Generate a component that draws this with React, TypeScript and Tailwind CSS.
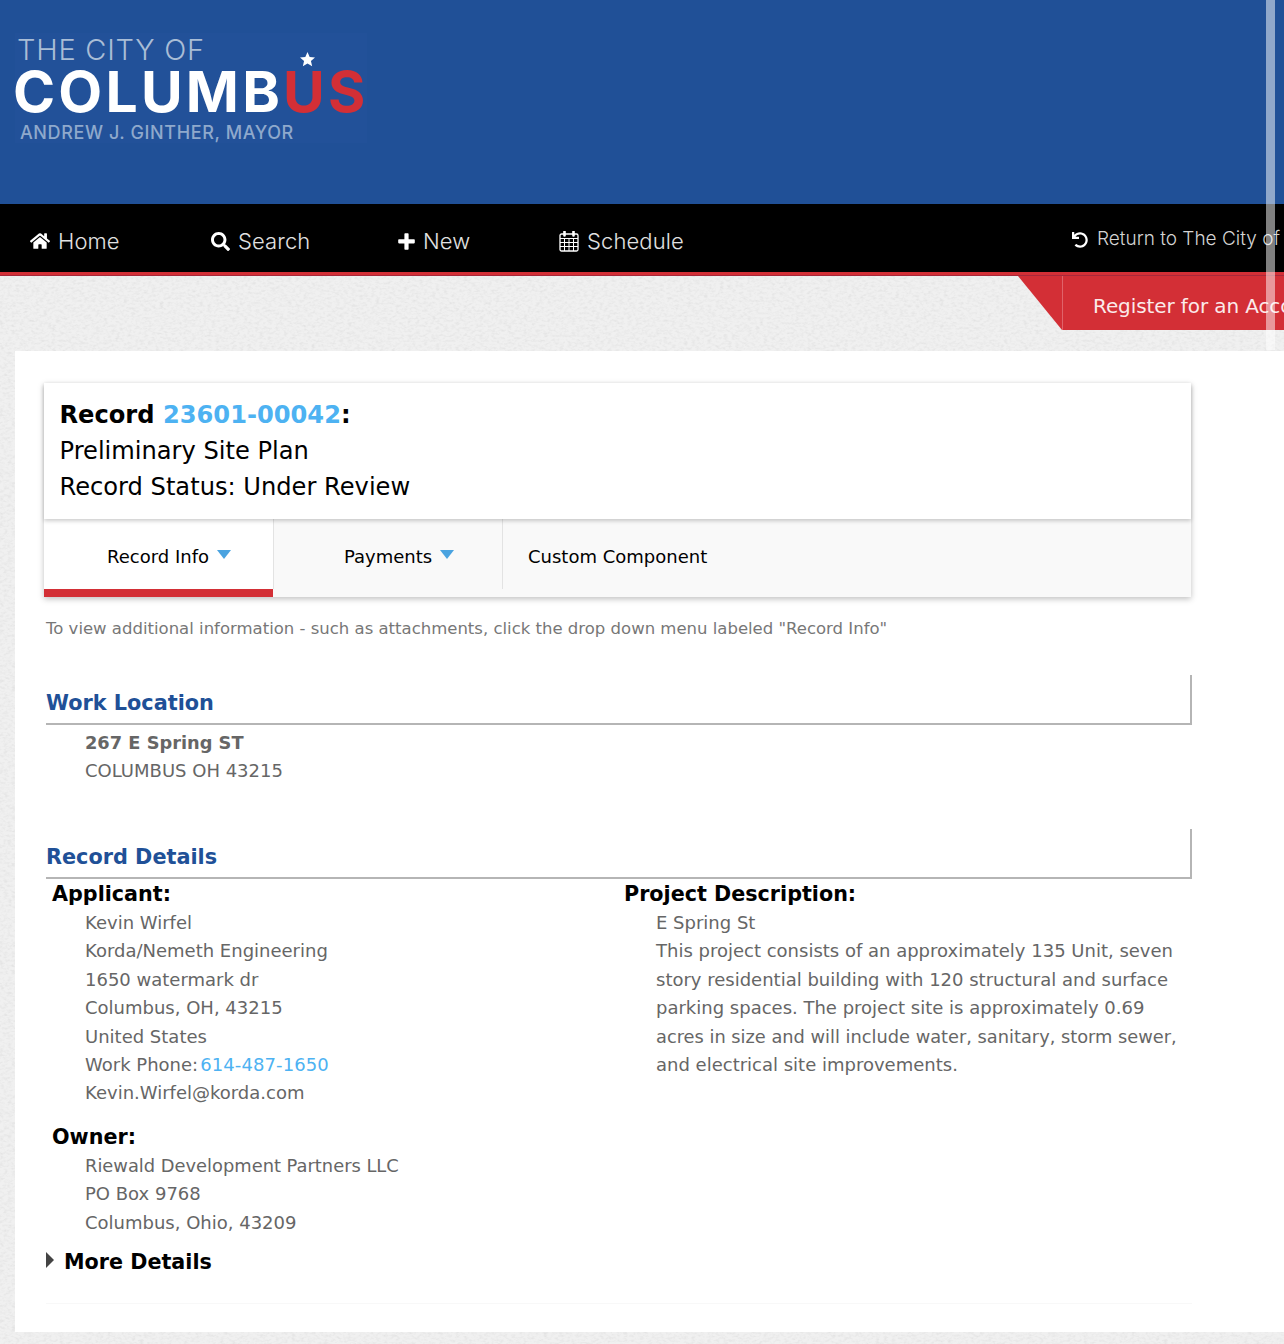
import { FaHome, FaSearch, FaUndo } from "react-icons/fa";
import type { ReactNode } from "react";

// FA4 style calendar, outlined with a day grid
const CalendarIcon = () => (
  <svg width="20" height="21" viewBox="0 0 20 21" fill="none" stroke="currentColor" strokeWidth="1.3">
    <rect x="1" y="3" width="18" height="17" rx="1.5" />
    <path d="M1 7.5h18M1 11.5h18M1 15.5h18M5.5 7.5V20M10 7.5V20M14.5 7.5V20" strokeWidth="1" />
    <path d="M5.5 0.5v4M14.5 0.5v4" strokeWidth="2.6" strokeLinecap="round" />
  </svg>
);

const PlusIcon = () => (
  <svg width="17" height="17" viewBox="0 0 17 17" fill="currentColor">
    <path d="M6.4 1a.8.8 0 0 1 .8-.8h2.6a.8.8 0 0 1 .8.8v5.2H16a.8.8 0 0 1 .8.8v2.6a.8.8 0 0 1-.8.8h-5.4V16a.8.8 0 0 1-.8.8H7.2a.8.8 0 0 1-.8-.8v-5.6H1a.8.8 0 0 1-.8-.8V7a.8.8 0 0 1 .8-.8h5.4z" />
  </svg>
);

const NAV = [
  { label: "Home", icon: <FaHome size={20} />, width: "w-[181px]" },
  { label: "Search", icon: <FaSearch size={19} />, width: "w-[187px]" },
  { label: "New", icon: <PlusIcon />, width: "w-[161px]" },
  { label: "Schedule", icon: <CalendarIcon />, width: "w-[160px]" },
];

const Logo = () => (
  <div className="flex h-[110px] w-[352px] flex-col bg-[#225199] font-['Inter',sans-serif]">
    <div className="ml-[2px] h-[32px] whitespace-nowrap pt-[2px] text-[29px] font-light leading-[30px] tracking-[0.75px] text-[#a9bdd6]">THE CITY OF</div>
    <div className="relative ml-[-2px] h-[54px] whitespace-nowrap text-[57px] font-bold leading-[54px] tracking-[3.2px] text-white">
      COLUMB<span className="text-[#d32f36]">US</span>
      <svg className="absolute left-[287px] top-[-13px]" width="15" height="15" viewBox="0 0 20 20" fill="#fff">
        <path d="M10 0l2.9 6.6 7.1.7-5.4 4.7 1.6 7L10 15.3 3.8 19l1.6-7L0 7.3l7.1-.7z" />
      </svg>
    </div>
    <div className="ml-[5px] mt-[3px] whitespace-nowrap text-[18px] font-medium leading-[21px] tracking-[0.6px] text-[#8fa9cc]">ANDREW J. GINTHER, MAYOR</div>
  </div>
);

const Caret = () => <span className="ml-2 mt-[-4px] h-0 w-0 border-x-[7px] border-t-[9px] border-x-transparent border-t-[#4aa3e0]" />;

const SectionHead = ({ title }: { title: string }) => (
  <div className="ml-[2px] flex h-[50px] w-[1146px] items-end border-r-2 border-b-2 border-[#b5b5b5] pb-[5px] text-[20.8px] font-bold leading-[30px] text-[#205097]">
    {title}
  </div>
);

const Line = ({ children }: { children: ReactNode }) => <div className="h-[28.4px] whitespace-nowrap leading-[28.4px]">{children}</div>;

export default function App() {
  return (
    <div className="relative h-[1344px] w-[1284px] overflow-hidden bg-[#f0f0f0] font-['DejaVu_Sans',sans-serif]">
      {/* paper texture behind the page */}
      <svg className="absolute inset-0" width="1284" height="1344">
        <filter id="paper">
          <feTurbulence type="fractalNoise" baseFrequency="0.25 0.4" numOctaves="3" seed="4" />
          <feColorMatrix values="0 0 0 0 0.6 0 0 0 0 0.6 0 0 0 0 0.6 0.5 0.5 0 0 -0.44" />
        </filter>
        <rect width="1284" height="1344" filter="url(#paper)" />
      </svg>

      <div className="relative">
        {/* blue header */}
        <header className="h-[204px] bg-[#205097] pl-[15px] pt-[33px]">
          <Logo />
        </header>

        {/* nav */}
        <nav className="h-[72px] border-b border-[#a8283a] bg-[#d32f36]">
          <div className="flex h-[68px] items-center bg-black pl-[30px] pt-[6px] font-['Inter',sans-serif] text-white">
            {NAV.map((n) => (
              <div key={n.label} className={`flex items-center gap-2 text-[22px] font-light tracking-[0.1px] text-[#e2e2e2] ${n.width}`}>
                <span className="text-white">{n.icon}</span>
                {n.label}
              </div>
            ))}
            <div className="ml-[353px] mt-[-3px] flex items-center gap-[9px] whitespace-nowrap text-[19px] font-light text-[#d4d4d4]">
              <FaUndo size={16} className="text-white" />
              Return to The City of
            </div>
          </div>
        </nav>

        {/* register strip */}
        <div className="flex h-[75px] justify-end">
          <div className="h-[54px] w-[44px] bg-[#d32f36] [clip-path:polygon(0_0,100%_0,100%_100%)]" />
          <div className="h-[54px] w-[222px] overflow-hidden whitespace-nowrap border-l border-[#e0636a] bg-[#d32f36] pl-[30px] text-[20px] leading-[60px] tracking-[-0.1px] text-[#fbeaea]">
            Register for an Account
          </div>
        </div>

        {/* main panel */}
        <main className="ml-[15px] h-[981px] bg-white pl-[29px] pt-[32px]">
          <div className="w-[1147px] shadow-[0_2px_6px_rgba(0,0,0,0.25)]">
            <div className="relative h-[136px] bg-white pl-[15.5px] pt-[14px] text-[24.15px] leading-[36px] text-black shadow-[0_2px_4px_rgba(0,0,0,0.2)]">
              <div className="font-bold">
                Record <span className="text-[#4db2f2]">23601-00042</span>:
              </div>
              <div>Preliminary Site Plan</div>
              <div>Record Status: Under Review</div>
            </div>
            <div className="flex h-[78px] bg-[#f9f9f9] text-[18px] text-black">
              <div className="flex w-[229px] items-center border-b-[8px] border-[#d32f36] bg-white pl-[63px] pt-[5px]">
                Record Info
                <Caret />
              </div>
              <div className="flex h-[70px] w-[230px] items-center border-x border-[#e3e3e3] pl-[70px] pt-[4px]">
                Payments
                <Caret />
              </div>
              <div className="flex h-[70px] items-center pl-[25px] pt-[4px]">Custom Component</div>
            </div>
          </div>

          <p className="ml-[2px] mt-[21px] text-[16.5px] leading-[22px] text-[#777]">
            To view additional information - such as attachments, click the drop down menu labeled "Record Info"
          </p>

          <div className="mt-[35px]">
            <SectionHead title="Work Location" />
            <div className="ml-[41px] mt-[4px] h-[57px] text-[18px] text-[#666]">
              <Line>
                <b className="text-[17.8px]">267 E Spring ST</b>
              </Line>
              <Line>COLUMBUS OH 43215</Line>
            </div>
          </div>

          <div className="mt-[43px]">
            <SectionHead title="Record Details" />
            <div className="flex text-[18px] text-[#666]">
              <div className="w-[580px] pl-[8px]">
                <h4 className="h-[30px] text-[20.7px] font-bold leading-[30px] text-black">Applicant:</h4>
                <div className="ml-[33px]">
                  <Line>Kevin Wirfel</Line>
                  <Line>Korda/Nemeth Engineering</Line>
                  <Line>1650 watermark dr</Line>
                  <Line>Columbus, OH, 43215</Line>
                  <Line>United States</Line>
                  <Line>
                    Work Phone:<span className="ml-[2px] tracking-[0.1px] text-[#4db2f2]">614-487-1650</span>
                  </Line>
                  <Line>Kevin.Wirfel@korda.com</Line>
                </div>
                <h4 className="mt-[14px] h-[30px] text-[20.7px] font-bold leading-[30px] text-black">Owner:</h4>
                <div className="ml-[33px]">
                  <Line>
                    <span className="text-[17.85px]">Riewald Development Partners LLC</span>
                  </Line>
                  <Line>PO Box 9768</Line>
                  <Line>Columbus, Ohio, 43209</Line>
                </div>
              </div>
              <div>
                <h4 className="h-[30px] text-[20.7px] font-bold leading-[30px] text-black">Project Description:</h4>
                <div className="ml-[32px]">
                  <Line>E Spring St</Line>
                  <Line>This project consists of an approximately 135 Unit, seven</Line>
                  <Line>story residential building with 120 structural and surface</Line>
                  <Line>parking spaces. The project site is approximately 0.69</Line>
                  <Line>
                    <span className="text-[17.8px]">acres in size and will include water, sanitary, storm sewer,</span>
                  </Line>
                  <Line>and electrical site improvements.</Line>
                </div>
              </div>
            </div>
            <div className="ml-[2px] mt-[10px] flex w-[1146px] items-center gap-[10px] border-b border-[#f8f8f8] pb-[26px] text-[20.7px] font-bold leading-[30px] text-black">
              <span className="mt-[-3px] h-0 w-0 border-y-[8px] border-l-[8px] border-y-transparent border-l-[#444]" />
              More Details
            </div>
          </div>
        </main>
      </div>

      {/* scrollbar thumb over the header */}
      <div className="absolute left-[1266px] top-0 h-[350px] w-[9px] bg-white/50" />
    </div>
  );
}
